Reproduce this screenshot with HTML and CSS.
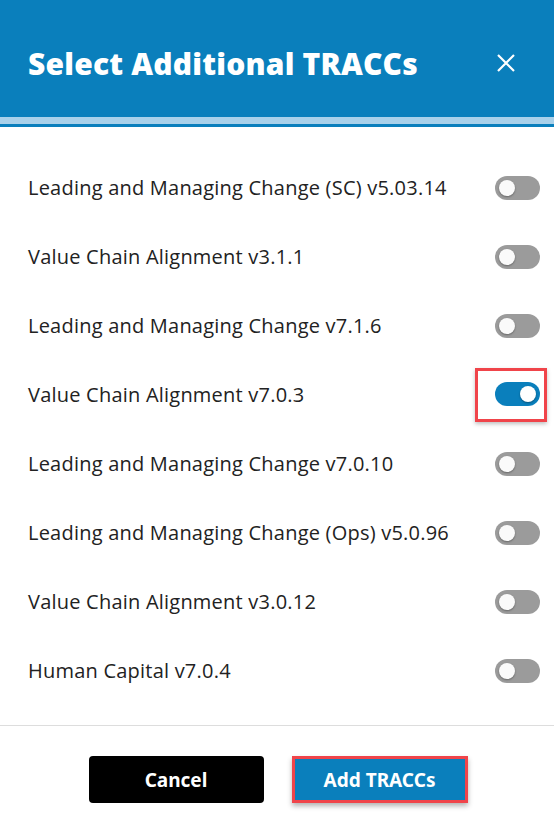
FILE: index.html
```html
<!DOCTYPE html>
<html lang="en">

<head>
    <meta charset="UTF-8">
    <meta name="viewport" content="width=device-width, initial-scale=1.0">
    <title>Select Additional TRACCs</title>
    <link rel="stylesheet" href="styles.css">
</head>

<body>
    <div class="modal">
        <header class="modal-header">
            <h1>Select Additional TRACCs</h1>
            <button class="close-btn" aria-label="Close">
                <svg width="20" height="20" viewBox="0 0 20 20">
                    <path d="M2 2 L18 18 M18 2 L2 18" stroke="#fff" stroke-width="2.2" fill="none" />
                </svg>
            </button>
        </header>

        <ul class="tracc-list">
            <li><span>Leading and Managing Change (SC) v5.03.14</span><span class="toggle"></span></li>
            <li><span>Value Chain Alignment v3.1.1</span><span class="toggle"></span></li>
            <li><span>Leading and Managing Change v7.1.6</span><span class="toggle"></span></li>
            <li><span>Value Chain Alignment v7.0.3</span><span class="toggle-wrap"><span class="toggle on"></span></span></li>
            <li><span>Leading and Managing Change v7.0.10</span><span class="toggle"></span></li>
            <li><span>Leading and Managing Change (Ops) v5.0.96</span><span class="toggle"></span></li>
            <li><span>Value Chain Alignment v3.0.12</span><span class="toggle"></span></li>
            <li><span>Human Capital v7.0.4</span><span class="toggle"></span></li>
        </ul>

        <footer class="modal-footer">
            <button class="btn btn-cancel">Cancel</button>
            <button class="btn btn-add">Add TRACCs</button>
        </footer>
    </div>
</body>

</html>
```

FILE: styles.css
```css
/* Reset styles */
* {
    margin: 0;
    padding: 0;
    box-sizing: border-box;
}

body {
    background-color: #fff;
    font-family: "Open Sans", "Noto Sans", sans-serif;
    color: #222;
}

.modal {
    width: 554px;
    height: 827px;
    display: flex;
    flex-direction: column;
}

/* Header */
.modal-header {
    height: 127px;
    background-color: #0a7fbc;
    border-bottom: 3px solid #0a7fbc;
    box-shadow: inset 0 -7px 0 0 #a9d1ea;
    display: flex;
    align-items: center;
    justify-content: space-between;
    padding: 2px 38px 0 28px;
}

.modal-header h1 {
    color: #fff;
    font-size: 30px;
    font-weight: 800;
    letter-spacing: 0.2px;
}

.close-btn {
    background: none;
    border: none;
    display: flex;
    cursor: pointer;
}

/* List */
.tracc-list {
    list-style: none;
    padding: 26px 14px 0 28px;
    flex: 1;
}

.tracc-list li {
    height: 69px;
    display: flex;
    align-items: center;
    justify-content: space-between;
    font-size: 20px;
    letter-spacing: 0.22px;
}

.toggle {
    width: 45px;
    height: 24px;
    border-radius: 12px;
    background-color: #9b9b9b;
    position: relative;
}

.toggle::after {
    content: "";
    position: absolute;
    left: 4px;
    top: 4px;
    width: 16px;
    height: 16px;
    border-radius: 50%;
    background-color: #fafafa;
    box-shadow: 0 1px 2px rgba(0, 0, 0, 0.35);
}

.toggle.on {
    background-color: #0a7fbc;
}

.toggle.on::after {
    left: auto;
    right: 4px;
    background-color: #fff;
}

.toggle-wrap {
    border: 3px solid #f0444a;
    padding: 11px 4px 13px 17px;
    margin-right: -7px;
    box-shadow: 0 2px 4px rgba(0, 0, 0, 0.25);
    display: flex;
}

/* Footer */
.modal-footer {
    border-top: 1px solid #ddd;
    height: 102px;
    display: flex;
    justify-content: center;
    gap: 28px;
    padding-top: 30px;
    padding-left: 2px;
}

.btn {
    width: 175px;
    height: 47px;
    border-radius: 4px;
    border: none;
    color: #fff;
    font-family: "Noto Sans", "Open Sans", sans-serif;
    font-size: 19px;
    font-weight: 700;
    cursor: pointer;
}

.btn-cancel {
    background-color: #000;
}

.btn-add {
    width: 176px;
    background-color: #0a7fbc;
    border: 3px solid #f0444a;
    border-radius: 0;
    box-shadow: 0 3px 5px rgba(0, 0, 0, 0.3);
}
```
